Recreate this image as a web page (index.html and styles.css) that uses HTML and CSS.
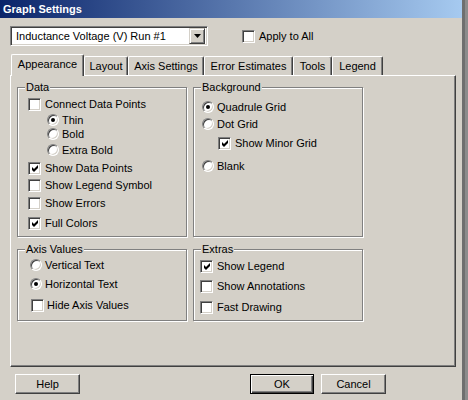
FILE: index.html
```html
<!DOCTYPE html>
<html>
<head>
<meta charset="utf-8">
<link rel="stylesheet" href="styles.css">
</head>
<body>
<div class="window">
  <div class="dialog">
    <div class="titlebar"><span class="title">Graph Settings</span></div>
    <div class="toprow">
      <div class="combo">
        <span class="combo-text">Inductance Voltage (V) Run #1</span>
        <span class="combo-btn"><svg width="7" height="4" viewBox="0 0 7 4"><polygon points="0,0 7,0 3.5,4" fill="#000"/></svg></span>
      </div>
      <div class="row apply"><span class="cb"></span><span>Apply to All</span></div>
    </div>
    <div class="tabs">
      <div class="tab active t-app">Appearance</div>
      <div class="tab t-lay">Layout</div>
      <div class="tab t-axis">Axis Settings</div>
      <div class="tab t-err">Error Estimates</div>
      <div class="tab t-tools">Tools</div>
      <div class="tab t-leg">Legend</div>
    </div>
    <div class="panel">
      <div class="groups">
        <div class="group g-data">
          <span class="glabel">Data</span>
          <div class="row ck"><span class="cb"></span><span>Connect Data Points</span></div>
          <div class="row rd ind-thin m2"><span class="rb on"></span><span>Thin</span></div>
          <div class="row rd ind-thin m0"><span class="rb"></span><span>Bold</span></div>
          <div class="row rd ind-thin m2"><span class="rb"></span><span>Extra Bold</span></div>
          <div class="row ck m4"><span class="cb on"><svg width="7" height="7" viewBox="0 0 7 7"><polygon points="0,2 2,4 6,0 6,3 2,7 0,5" fill="#000"/></svg></span><span>Show Data Points</span></div>
          <div class="row ck m3"><span class="cb"></span><span>Show Legend Symbol</span></div>
          <div class="row ck m4"><span class="cb"></span><span>Show Errors</span></div>
          <div class="row ck m6"><span class="cb on"><svg width="7" height="7" viewBox="0 0 7 7"><polygon points="0,2 2,4 6,0 6,3 2,7 0,5" fill="#000"/></svg></span><span>Full Colors</span></div>
        </div>
        <div class="group g-bg">
          <span class="glabel">Background</span>
          <div class="row rd"><span class="rb on"></span><span>Quadrule Grid</span></div>
          <div class="row rd m3"><span class="rb"></span><span>Dot Grid</span></div>
          <div class="row ck ind-minor m5"><span class="cb on"><svg width="7" height="7" viewBox="0 0 7 7"><polygon points="0,2 2,4 6,0 6,3 2,7 0,5" fill="#000"/></svg></span><span>Show Minor Grid</span></div>
          <div class="row rd m9"><span class="rb"></span><span>Blank</span></div>
        </div>
        <div class="group g-axis">
          <span class="glabel">Axis Values</span>
          <div class="row rd"><span class="rb"></span><span>Vertical Text</span></div>
          <div class="row rd m5"><span class="rb on"></span><span>Horizontal Text</span></div>
          <div class="row ck ind-hide m7"><span class="cb"></span><span>Hide Axis Values</span></div>
        </div>
        <div class="group g-extras">
          <span class="glabel">Extras</span>
          <div class="row ck"><span class="cb on"><svg width="7" height="7" viewBox="0 0 7 7"><polygon points="0,2 2,4 6,0 6,3 2,7 0,5" fill="#000"/></svg></span><span>Show Legend</span></div>
          <div class="row ck m6"><span class="cb"></span><span>Show Annotations</span></div>
          <div class="row ck m7"><span class="cb"></span><span>Fast Drawing</span></div>
        </div>
      </div>
    </div>
    <div class="buttons">
      <div class="btn help">Help</div>
      <div class="btn default ok">OK</div>
      <div class="btn cancel">Cancel</div>
    </div>
  </div>
  <div class="edge"></div>
</div>
</body>
</html>
```

FILE: styles.css
```css
html, body {
  margin: 0;
  padding: 0;
  background: #d4d0c8;
}
body {
  font-family: "Liberation Sans", Arial, sans-serif;
  font-size: 11px;
  color: #000;
}
.window {
  display: flex;
  width: 468px;
  height: 400px;
  overflow: hidden;
}
.dialog {
  width: 462px;
  height: 400px;
  display: flex;
  flex-direction: column;
}
.edge {
  width: 6px;
  height: 400px;
  background: linear-gradient(to right, #6f6f6f 0, #6f6f6f 3px, #8c8c8c 3px);
}
.titlebar {
  height: 18px;
  background: linear-gradient(to right, #0a246a, #a6caf0);
  display: flex;
  align-items: center;
  padding-left: 3px;
}
.title {
  color: #fff;
  font-weight: bold;
  font-size: 11px;
}
.toprow {
  display: flex;
  align-items: center;
  margin-top: 8px;
  height: 20px;
}
.combo {
  margin-left: 10px;
  width: 198px;
  height: 20px;
  box-sizing: border-box;
  background: #fff;
  border: 1px solid;
  border-color: #808080 #fff #fff #808080;
  box-shadow: inset 1px 1px 0 #404040, inset -1px -1px 0 #d4d0c8;
  display: flex;
  align-items: center;
  padding: 2px;
}
.combo-text {
  flex: 1;
  padding-left: 3px;
}
.combo-btn {
  width: 16px;
  height: 16px;
  box-sizing: border-box;
  background: #d4d0c8;
  border: 1px solid;
  border-color: #d4d0c8 #404040 #404040 #d4d0c8;
  box-shadow: inset 1px 1px 0 #fff, inset -1px -1px 0 #808080;
  display: flex;
  align-items: center;
  justify-content: center;
}
.apply {
  margin-left: 34px;
}
.tabs {
  display: flex;
  align-items: flex-end;
  margin-top: 8px;
  height: 21px;
  padding-left: 11px;
  position: relative;
  z-index: 1;
}
.tab {
  box-sizing: border-box;
  height: 19px;
  border: 1px solid;
  border-bottom: none;
  border-color: #fff #404040 #fff #fff;
  box-shadow: inset -1px 0 0 #808080;
  border-radius: 2px 2px 0 0;
  display: flex;
  align-items: center;
  justify-content: center;
  padding-bottom: 1px;
}
.tab.active {
  height: 22px;
  margin-bottom: -1px;
  background: #d4d0c8;
  padding-bottom: 3px;
}
.t-app { width: 73px; }
.t-lay { width: 44px; }
.t-axis { width: 76px; }
.t-err { width: 89px; }
.t-tools { width: 39px; }
.t-leg { width: 51px; }
.panel {
  margin-left: 10px;
  width: 446px;
  height: 292px;
  box-sizing: border-box;
  border: 1px solid;
  border-color: #fff #404040 #404040 #fff;
  box-shadow: inset -1px -1px 0 #808080;
  padding: 11px 0 0 6px;
}
.groups {
  display: grid;
  grid-template-columns: 170px 170px;
  grid-template-rows: 150px 72px;
  column-gap: 6px;
  row-gap: 12px;
}
.group {
  position: relative;
  box-sizing: border-box;
  border: 1px solid #808080;
  box-shadow: inset 1px 1px 0 #fff, 1px 1px 0 #fff;
  display: flex;
  flex-direction: column;
  align-items: flex-start;
}
.glabel {
  position: absolute;
  top: -8px;
  left: 7px;
  padding: 0 1px;
  line-height: 14px;
  background: #d4d0c8;
}
.g-data { padding: 9px 0 0 10px; }
.g-bg { padding: 12px 0 0 8px; }
.g-axis { padding: 8px 0 0 12px; }
.g-extras { padding: 9px 0 0 6px; }
.row {
  display: flex;
  align-items: center;
  height: 14px;
  white-space: nowrap;
}
.row.ck { gap: 4px; }
.row.rd { gap: 3px; }
.apply { gap: 4px; }
.ind-thin { margin-left: 19px; }
.ind-minor { margin-left: 16px; }
.ind-hide { margin-left: 1px; gap: 3px !important; }
.m0 { margin-top: 0; }
.m2 { margin-top: 2px; }
.m3 { margin-top: 3px; }
.m4 { margin-top: 4px; }
.m5 { margin-top: 5px; }
.m6 { margin-top: 6px; }
.m7 { margin-top: 7px; }
.m9 { margin-top: 9px; }
.cb {
  width: 13px;
  height: 13px;
  flex: none;
  box-sizing: border-box;
  background: #fff;
  border: 1px solid;
  border-color: #808080 #fff #fff #808080;
  box-shadow: inset 1px 1px 0 #404040, inset -1px -1px 0 #d4d0c8;
  display: flex;
  align-items: center;
  justify-content: center;
}
.cb svg { display: block; margin: 1px 0 0 1px; }
.rb {
  width: 12px;
  height: 12px;
  flex: none;
  box-sizing: border-box;
  border-radius: 50%;
  background: #fff;
  border: 1px solid;
  border-color: #808080 #fff #fff #808080;
  box-shadow: inset 1px 1px 0 #404040, inset -1px -1px 0 #d4d0c8;
  display: flex;
  align-items: center;
  justify-content: center;
}
.rb.on::after {
  content: "";
  width: 4px;
  height: 4px;
  border-radius: 50%;
  background: #000;
}
.buttons {
  display: flex;
  margin-top: 7px;
  height: 20px;
  padding-left: 15px;
}
.btn {
  width: 65px;
  height: 20px;
  box-sizing: border-box;
  border: 1px solid;
  border-color: #fff #404040 #404040 #fff;
  box-shadow: inset -1px -1px 0 #808080;
  display: flex;
  align-items: center;
  justify-content: center;
}
.btn.default {
  border-color: #000;
  box-shadow: inset 1px 1px 0 #fff, inset -1px -1px 0 #404040, inset -2px -2px 0 #808080;
}
.ok { margin-left: 170px; width: 64px; }
.cancel { margin-left: 7px; }
```
